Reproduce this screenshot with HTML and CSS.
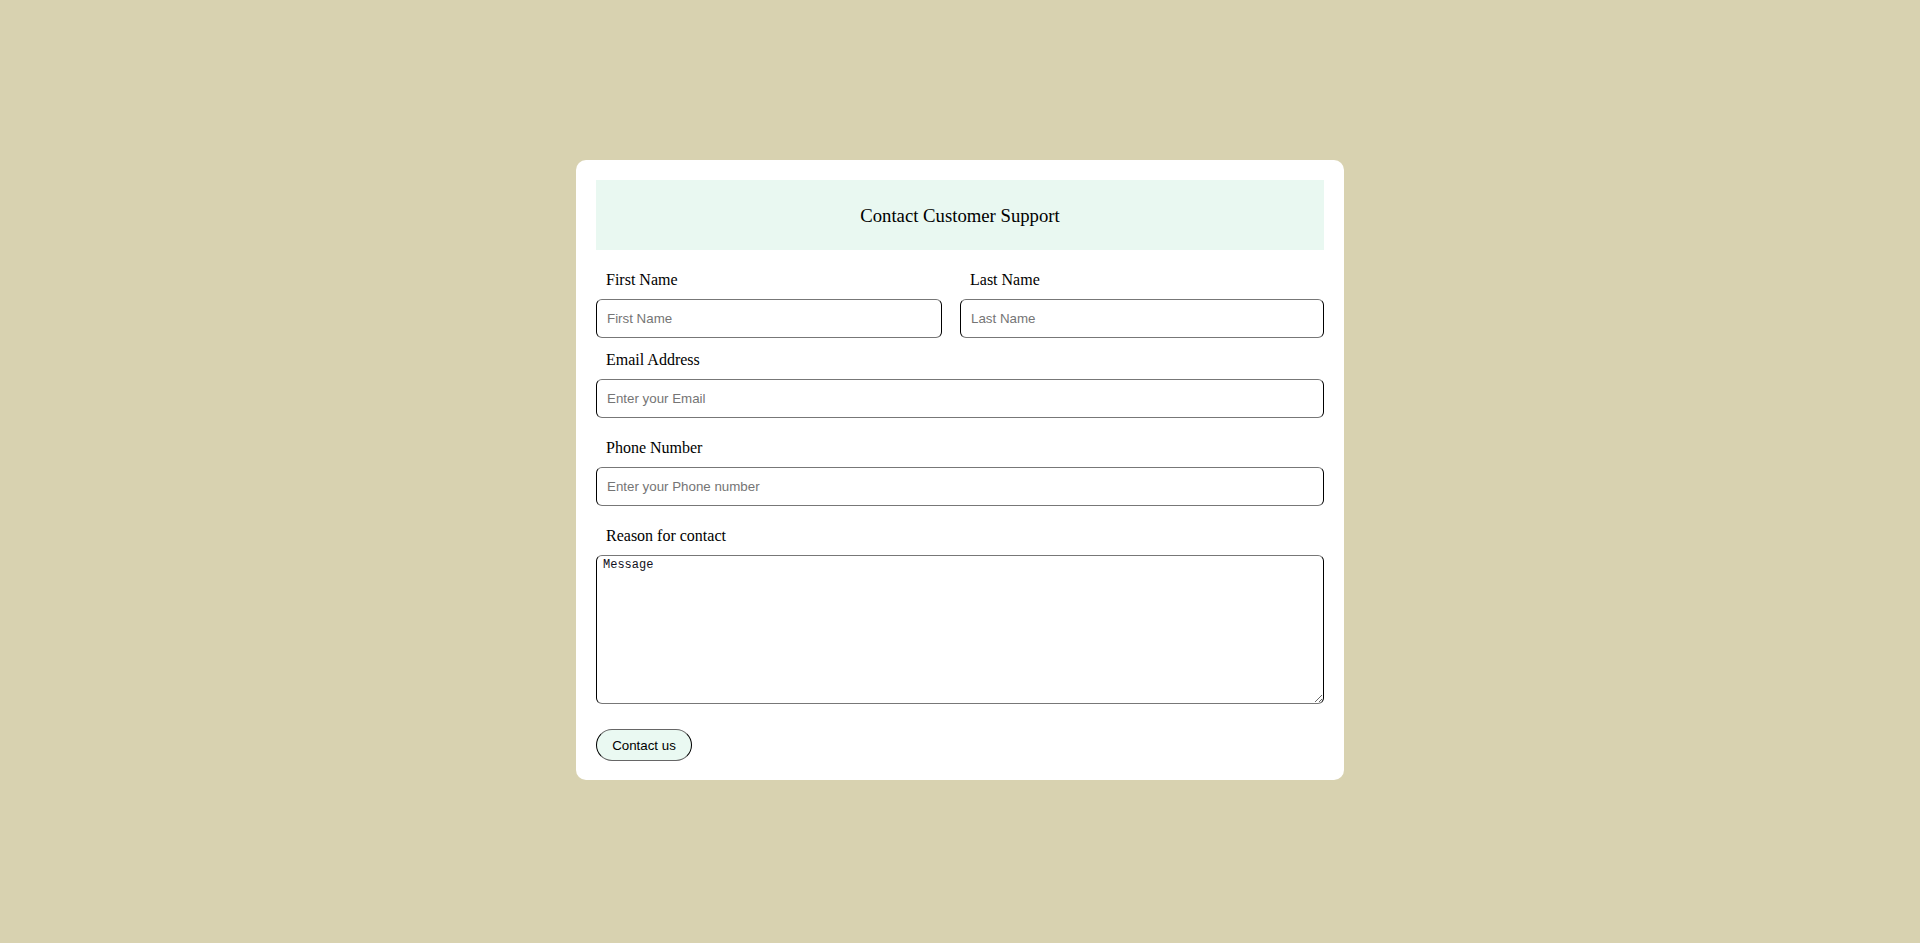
FILE: index.html
```html
<!DOCTYPE html>
<html lang="en">
<head>
<meta charset="utf-8">
<title>Contact Customer Support</title>
<link rel="stylesheet" href="styles.css">
</head>
<body>
  <form class="card">
    <div class="card-header">Contact Customer Support</div>

    <div class="name-row">
      <div class="field">
        <label class="label" for="first">First Name</label>
        <input class="input" id="first" type="text" placeholder="First Name">
      </div>
      <div class="field">
        <label class="label" for="last">Last Name</label>
        <input class="input" id="last" type="text" placeholder="Last Name">
      </div>
    </div>

    <div class="field field-email">
      <label class="label" for="email">Email Address</label>
      <input class="input" id="email" type="email" placeholder="Enter your Email">
    </div>

    <div class="field field-gap">
      <label class="label" for="phone">Phone Number</label>
      <input class="input" id="phone" type="tel" placeholder="Enter your Phone number">
    </div>

    <div class="field field-gap">
      <label class="label" for="msg">Reason for contact</label>
      <textarea class="textarea" id="msg">Message</textarea>
    </div>

    <div class="actions">
      <button class="btn" type="button">Contact us</button>
    </div>
  </form>
</body>
</html>
```

FILE: styles.css
```css
html, body {
  margin: 0;
  padding: 0;
}

body {
  background: #d8d2b0;
  min-height: calc(100vh - 3px);
  display: flex;
  align-items: center;
  justify-content: center;
  font-family: "Liberation Serif", "Times New Roman", serif;
  color: #000;
}

.card {
  width: 768px;
  box-sizing: border-box;
  background: #ffffff;
  border-radius: 10px;
  padding: 20px 20px 19px;
  display: flex;
  flex-direction: column;
}

.card-header {
  height: 70px;
  background: #e9f8f1;
  display: flex;
  align-items: center;
  justify-content: center;
  font-size: 18.72px;
  line-height: 22px;
  padding-top: 1px;
  box-sizing: border-box;
}

.name-row {
  display: grid;
  grid-template-columns: 346px 364px;
  column-gap: 18px;
  margin-top: 21px;
}

.field {
  display: flex;
  flex-direction: column;
}

.field-email {
  margin-top: 13px;
}

.field-gap {
  margin-top: 21px;
}

.label {
  display: block;
  font-size: 16px;
  line-height: 18px;
  height: 18px;
  padding-left: 10px;
  margin-bottom: 10px;
}

.input {
  box-sizing: border-box;
  height: 39px;
  width: 100%;
  margin: 0;
  padding: 0 10px;
  border: 1px solid;
  border-color: #777777 #000000 #777777 #000000;
  border-radius: 6px;
  background: #ffffff;
  font-family: "Liberation Sans", Arial, sans-serif;
  font-size: 13.33px;
  color: #000;
  outline: none;
}

.input::placeholder {
  color: #757575;
}

.textarea {
  box-sizing: border-box;
  height: 149px;
  width: 100%;
  margin: 0;
  padding: 2px 6px;
  border: 1px solid;
  border-color: #777777 #000000 #777777 #000000;
  border-radius: 6px;
  background: #ffffff;
  font-family: "Liberation Mono", Consolas, monospace;
  font-size: 12px;
  line-height: 15px;
  color: #101020;
  resize: both;
  outline: none;
}

.actions {
  margin-top: 25px;
  display: flex;
}

.btn {
  box-sizing: border-box;
  height: 32px;
  width: 96px;
  padding: 0;
  border: 1px solid;
  border-color: #666666 #000000 #666666 #000000;
  border-radius: 16px;
  background: #eaf9f2;
  font-family: "Liberation Sans", Arial, sans-serif;
  font-size: 13.33px;
  color: #000;
  cursor: pointer;
}
```
